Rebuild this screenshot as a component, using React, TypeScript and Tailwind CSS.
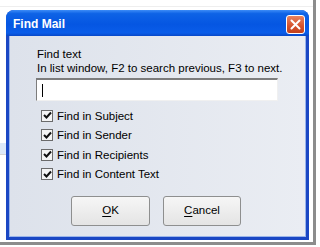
import React from 'react';

const options = ['Find in Subject', 'Find in Sender', 'Find in Recipients', 'Find in Content Text'];

const CheckBox: React.FC<{ label: string }> = ({ label }) => (
    <div className="flex items-center h-[19.5px] pl-[31px]">
        <span className="w-[12px] h-[12px] border border-[#6b6b6b] bg-[#f4f4f4] flex items-center justify-center">
            <svg width="9" height="9" viewBox="0 0 9 9">
                <path d="M1 4 L3.5 6.5 L8 1.5" fill="none" stroke="#111" strokeWidth="2" />
            </svg>
        </span>
        <span className="ml-[4px] text-[11.5px] leading-[14px] text-black">{label}</span>
    </div>
);

const Button: React.FC<{ first: string; rest: string; width: string }> = ({ first, rest, width }) => (
    <button
        className={`${width} h-[30px] rounded-[3px] border border-[#8e8f8f] bg-[linear-gradient(to_bottom,#f6f6f6,#e4e4e4)] text-[11.5px] text-black flex items-center justify-center`}
    >
        <span className="underline underline-offset-2">{first}</span>
        {rest}
    </button>
);

export default function App() {
    return (
        <div className="w-[320px] h-[247px] bg-white overflow-hidden font-['Liberation_Sans',Arial,sans-serif]">
            {/* list window behind the dialog */}
            <div className="w-[316px] h-[245px] border-r-[3px] border-b-[3px] border-[#8c8c8c] pt-[10px] pl-[6px] [background:linear-gradient(to_bottom,transparent_143px,#dce8f8_143px,#dce8f8_154px,#d4d4d4_154px,#d4d4d4_155px,transparent_155px)_0_0/6px_100%_no-repeat,linear-gradient(to_bottom,transparent_6px,#eeeeee_6px,#eeeeee_7px,transparent_7px)]">
                <div className="w-[303px] h-[230px] rounded-t-[8px] overflow-hidden flex flex-col bg-[#1a47c4]">
                    {/* title bar */}
                    <div className="h-[26px] flex items-start bg-[linear-gradient(to_bottom,#3d8cf7_0%,#0e63e6_14%,#0556e2_55%,#0a5de9_88%,#0848c8_100%)]">
                        <span className="ml-[7px] mt-[7px] text-[12px] leading-[14px] font-bold text-white">Find Mail</span>
                        <span className="ml-auto mr-[4px] mt-[5px] w-[19px] h-[19px] rounded-[3px] border border-white bg-[linear-gradient(to_bottom,#e8835f,#d4512c_60%,#c2401d)] flex items-center justify-center">
                            <svg width="11" height="11" viewBox="0 0 11 11">
                                <path d="M1.5 1.5 L9.5 9.5 M9.5 1.5 L1.5 9.5" stroke="#fff" strokeWidth="2" strokeLinecap="round" />
                            </svg>
                        </span>
                    </div>

                    {/* client area */}
                    <div className="flex-1 mx-[3px] mb-[3px] bg-[linear-gradient(to_right,#dde2eb,#eaedf3)] border-l border-r border-b border-[#9ab5ea]">
                        <div className="pl-[27px] pt-[11px] text-[11.5px] leading-[14px] text-black">
                            <div>Find text</div>
                            <div>In list window, F2 to search previous, F3 to next.</div>
                        </div>

                        <div className="ml-[26px] mt-[3px] w-[242px] h-[23px] bg-white border-t-2 border-l border-[#7c7c7c] border-r border-b border-r-[#f0f0f0] border-b-[#f0f0f0] flex items-center pl-[5px]">
                            <span className="w-px h-[13px] bg-black" />
                        </div>

                        <div className="mt-[5px] flex flex-col">
                            {options.map((o) => (
                                <CheckBox key={o} label={o} />
                            ))}
                        </div>

                        <div className="mt-[12px] flex pl-[61px] gap-[13px]">
                            <Button first="O" rest="K" width="w-[79px]" />
                            <Button first="C" rest="ancel" width="w-[78px]" />
                        </div>
                    </div>
                </div>
            </div>
        </div>
    );
}
